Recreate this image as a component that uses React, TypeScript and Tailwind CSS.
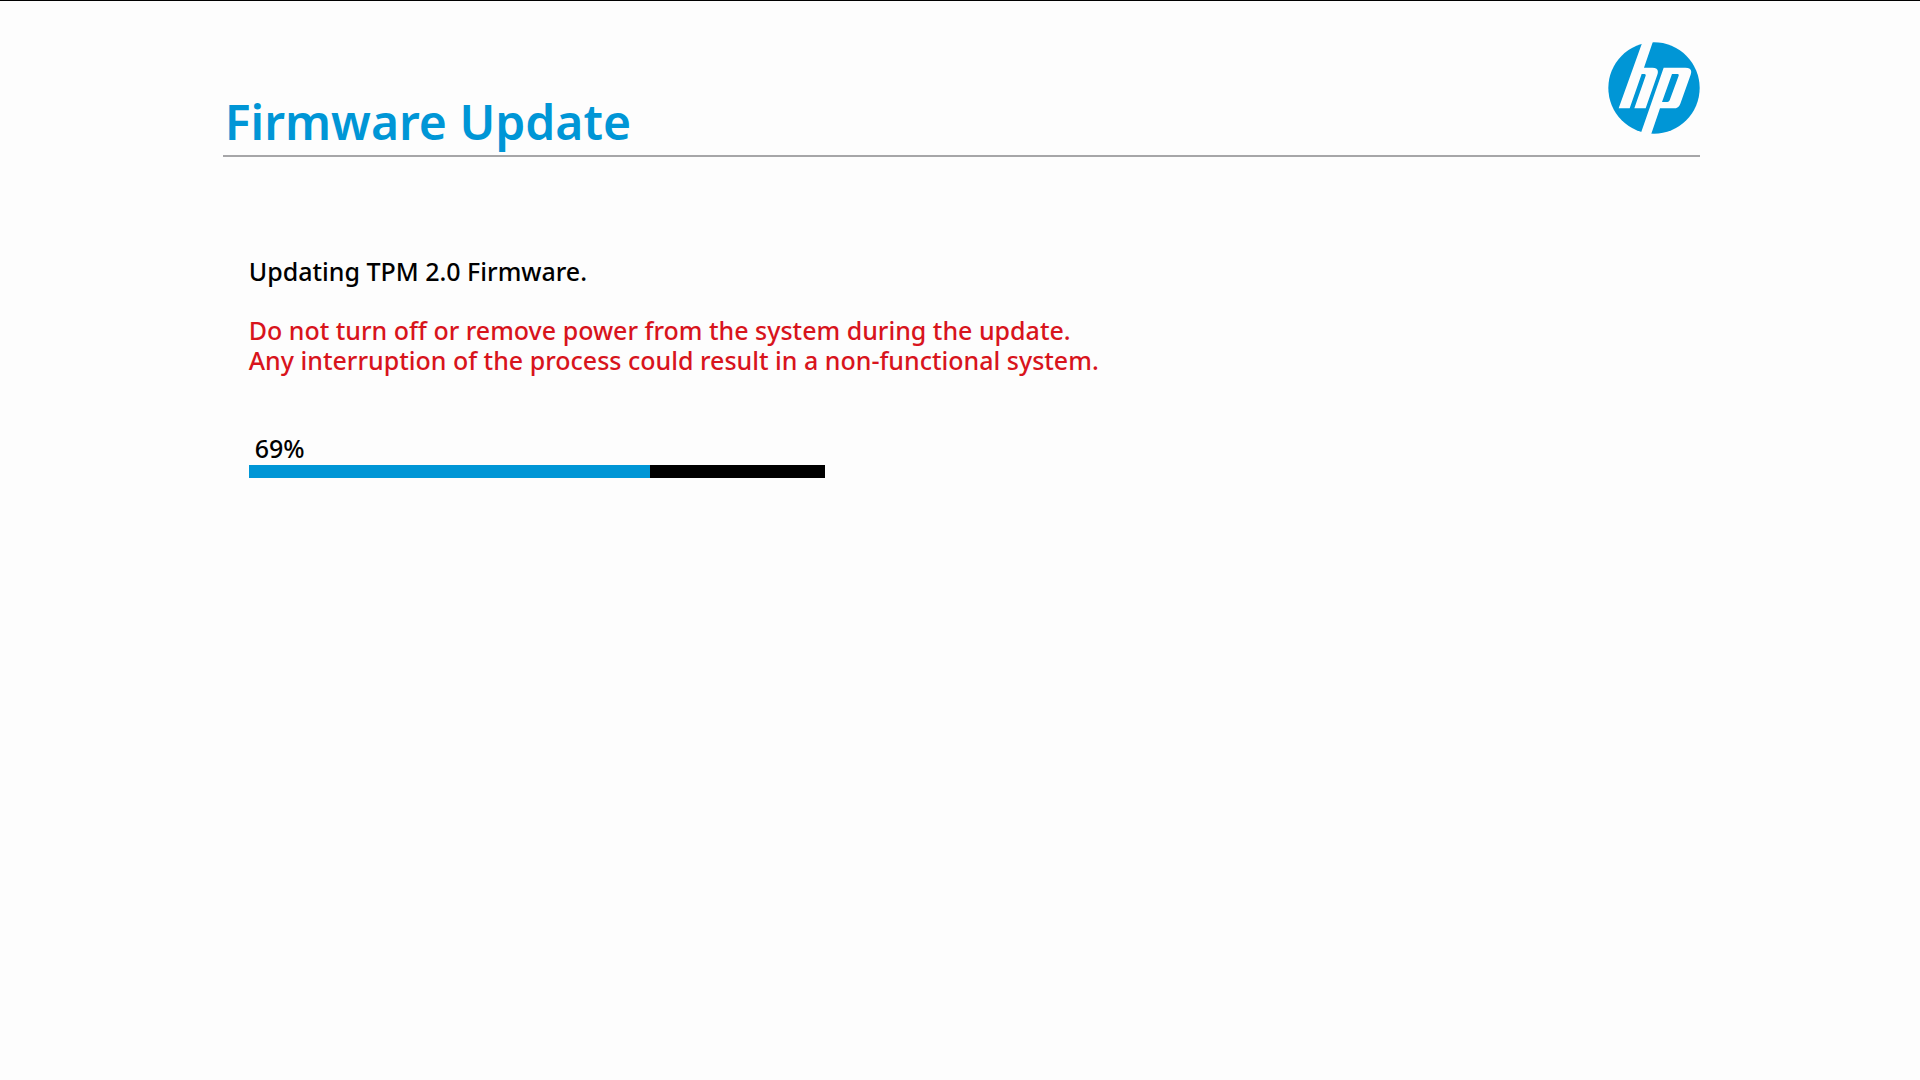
function Logo() {
  return (
    <svg viewBox="0 0 276 276" className="size-[92px] shrink-0" role="img" aria-label="HP">
      <circle cx="138" cy="138" r="137" fill="#0096d6" />
      <g fill="#fdfdfd">
        <path d="M104 -2 L135 -2 L108 77 L133 77 Q155 77 148 98 L113 199 L79 199 L113 101 Q114 96 109 96 L101 96 L65 199 L32 199 Z" />
        <path fillRule="evenodd" d="M167 77 L232 77 Q255 77 248 98 L217 185 Q212 199 197 199 L156 199 L129 278 L97 278 Z M192 96 L162 180 L178 180 Q183 180 185 175 L212 101 Q213 96 209 96 Z" />
      </g>
    </svg>
  );
}

export default function App() {
  const progress = 69.6;
  const percent = Math.floor(progress);
  return (
    <div className='min-h-screen border-t border-black bg-[#fdfdfd] pr-[11.45%] pl-[11.6%] pt-[41px] font-["Noto_Sans",sans-serif] text-[25px] leading-[30px] font-medium text-black'>
      <header className="flex items-start justify-between border-b-2 border-[#a6a6a8] pb-2">
        <h1 className="mt-[55px] pl-0.5 text-5xl leading-[50px] font-semibold text-[#0096d6]">Firmware Update</h1>
        <Logo />
      </header>
      <main className="px-[26px] pt-[99px]">
        <p>Updating TPM 2.0 Firmware.</p>
        <p className="mt-[29px] text-[#d8141c]">
          Do not turn off or remove power from the system during the update.
          <br />
          Any interruption of the process could result in a non-functional system.
        </p>
        <div className="mt-[58px]">
          <p className="pl-1.5" id="progress-label">{percent}%</p>
          <div
            role="progressbar"
            aria-labelledby="progress-label"
            aria-valuenow={percent}
            aria-valuemin={0}
            aria-valuemax={100}
            className="mt-0.5 h-[13px] w-[576px] max-w-full bg-black"
          >
            <div className="h-full bg-[#0096d6]" style={{ width: `${progress}%` }} />
          </div>
        </div>
      </main>
    </div>
  );
}
